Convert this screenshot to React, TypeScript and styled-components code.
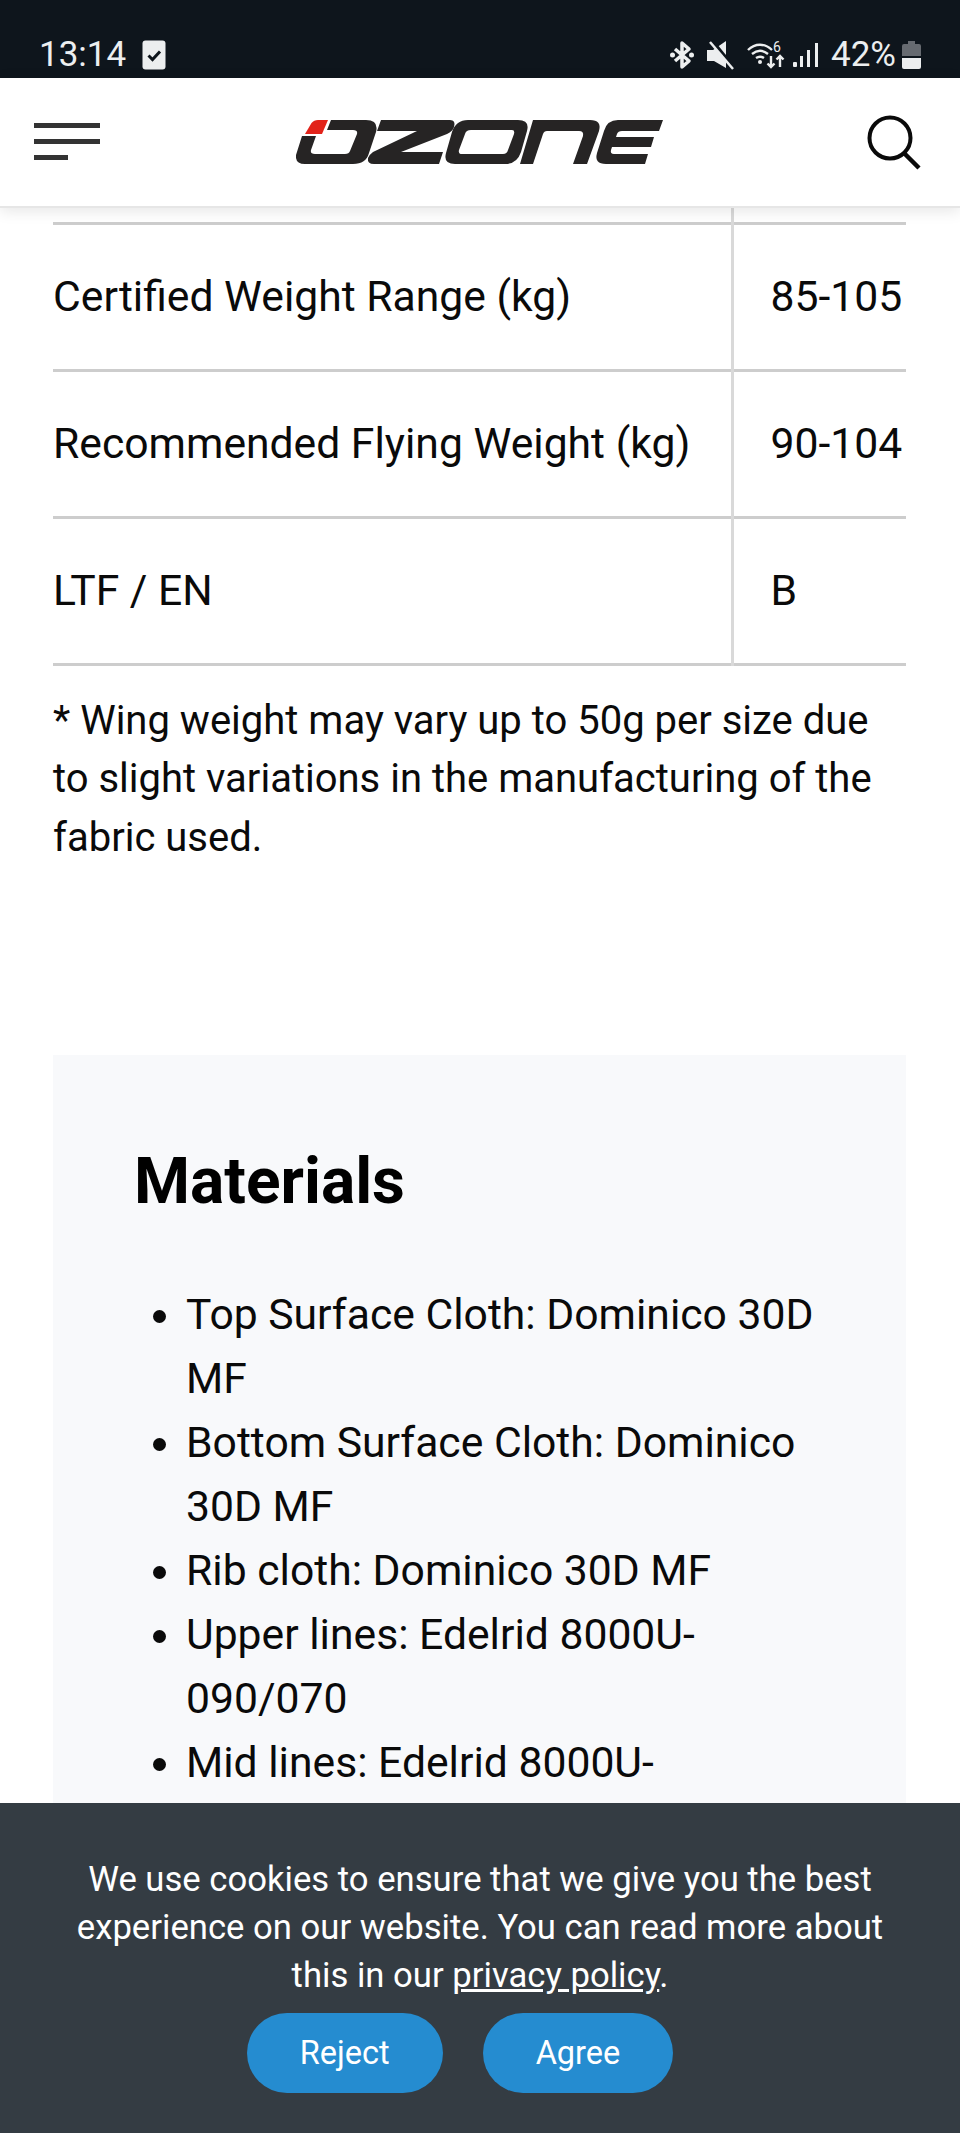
import React from "react";
import styled, { createGlobalStyle } from "styled-components";

const Global = createGlobalStyle`
  html, body { margin: 0; padding: 0; background: #fff; }
  body { font-family: Roboto, "Liberation Sans", sans-serif; color: #0a0a0a; }
  * { box-sizing: border-box; }
`;

const Screen = styled.div`
  position: relative;
  width: 960px;
  height: 2133px;
  overflow: hidden;
  display: flex;
  flex-direction: column;
`;

const StatusBar = styled.div`
  height: 78px;
  flex: none;
  background: #0e151c;
  color: #eceeef;
  display: flex;
  justify-content: space-between;
  align-items: flex-start;
  padding: 35px 39px 0 39px;
  font-size: 35px;
  line-height: 40px;
`;

const StatusGroup = styled.div`
  display: flex;
  align-items: center;
  height: 40px;
`;

const Time = styled.span`
  margin-right: 16px;
`;

const Percent = styled.span`
  margin: 0 6px 0 13px;
`;

const StatusIcon = styled.svg<{ $gap?: number }>`
  display: block;
  flex: none;
  overflow: visible;
  margin-left: ${(p) => p.$gap ?? 0}px;
`;

const Nav = styled.header`
  position: relative;
  z-index: 2;
  height: 130px;
  flex: none;
  background: #fff;
  border-bottom: 2px solid #e6e6e6;
  box-shadow: 0 3px 14px rgba(0, 0, 0, 0.1);
  display: flex;
  align-items: center;
  justify-content: space-between;
  padding: 0 39px 0 34px;
`;

const MenuButton = styled.div`
  width: 66px;
  display: flex;
  flex-direction: column;
  gap: 11px;
  margin-bottom: 1px;
`;

const MenuBar = styled.span<{ $short?: boolean }>`
  display: block;
  height: 5px;
  width: ${(p) => (p.$short ? "34px" : "66px")};
  background: #333;
`;

const Logo = styled.svg`
  display: block;
  margin: 1px 7px 0 0;
`;

const SearchIcon = styled.svg`
  display: block;
`;

const Main = styled.main`
  flex: 1;
  min-height: 0;
  overflow: hidden;
  padding: 0 54px 0 53px;
`;

const SpecTable = styled.table`
  width: 853px;
  table-layout: fixed;
  border-collapse: collapse;
  font-size: 42.67px;
`;

const Row = styled.tr`
  height: 147px;
  border-bottom: 3px solid #cdcdcd;
`;

const ClippedRow = styled.tr`
  height: 15px;
  border-bottom: 3px solid #cdcdcd;
`;

const NameCell = styled.td`
  width: 679px;
  padding: 0 0 2px;
  border-right: 3px solid #d9d9d9;
`;

const ValueCell = styled.td`
  padding: 0 0 2px 37px;
  white-space: nowrap;
`;

const Note = styled.p`
  margin: 26px 0 0;
  font-size: 40px;
  line-height: 58.67px;
`;

const Panel = styled.section`
  margin-top: 187px;
  background: #f8f9fb;
  padding: 89px 82px 0 81px;
  height: 900px;
`;

const Heading = styled.h2`
  margin: 0;
  font-size: 64px;
  line-height: 76px;
  font-weight: 700;
  color: #000;
`;

const List = styled.ul`
  margin: 62px 0 0;
  padding: 0 0 0 52px;
  font-size: 42.67px;
  line-height: 64px;
`;

const Banner = styled.aside`
  position: absolute;
  z-index: 3;
  left: 0;
  right: 0;
  bottom: 0;
  height: 330px;
  background: #343c43;
  color: #fff;
  text-align: center;
  padding: 52px 60px 0;
`;

const BannerText = styled.p`
  margin: 0;
  font-size: 34.67px;
  line-height: 48px;
`;

const BannerLink = styled.a`
  color: #fff;
  text-decoration: underline;
`;

const BannerActions = styled.div`
  margin-top: 14px;
  display: flex;
  justify-content: center;
`;

const Pill = styled.button`
  height: 80px;
  border: 0;
  border-radius: 40px;
  background: #258cd0;
  color: #fff;
  font: 400 32.5px Roboto, sans-serif;
  padding: 0 53px;
  margin-right: 40px;
`;

const rows = [
  ["Certified Weight Range (kg)", "85-105"],
  ["Recommended Flying Weight (kg)", "90-104"],
  ["LTF / EN", "B"],
];

const materials = [
  "Top Surface Cloth: Dominico 30D MF",
  "Bottom Surface Cloth: Dominico 30D MF",
  "Rib cloth: Dominico 30D MF",
  "Upper lines: Edelrid 8000U-090/070",
  "Mid lines: Edelrid 8000U-",
];

export default function App() {
  return (
    <Screen>
      <Global />
      <StatusBar>
        <StatusGroup>
          <Time>13:14</Time>
          <StatusIcon width="24" height="30" viewBox="0 0 24 30">
            <rect x="0.5" y="0.5" width="23" height="29" rx="3" fill="#eceeef" />
            <path d="M6.500 15.500l4 4 7.500-8" fill="none" stroke="#0e151c" strokeWidth="3" />
          </StatusIcon>
        </StatusGroup>
        <StatusGroup>
          <StatusIcon width="24" height="28" viewBox="0 0 24 28">
            <path
              d="M12 14V2l7 6-14 12M12 14v12l7-6L5 8"
              fill="none"
              stroke="#eceeef"
              strokeWidth="3.500"
              strokeLinejoin="round"
            />
            <circle cx="2.500" cy="14" r="2.500" fill="#eceeef" />
            <circle cx="21.500" cy="14" r="2.500" fill="#eceeef" />
          </StatusIcon>
          <StatusIcon $gap={13} width="27" height="28" viewBox="0 0 27 28">
            <path d="M0 9h6l13-9v27L7 20H0z" fill="#eceeef" />
            <path d="M5 0l22 27" stroke="#0e151c" strokeWidth="4" />
            <path d="M3 1l23 27" stroke="#eceeef" strokeWidth="2.500" />
          </StatusIcon>
          <StatusIcon $gap={13} width="38" height="28" viewBox="0 0 38 28">
            <g fill="none" stroke="#eceeef" strokeWidth="2.400">
              <path d="M1 9c7-7 17-7 24 0" />
              <path d="M5 13c5-4 11-4 16 0" />
              <path d="M9 17c3-2 5-2 8 0" />
              <path d="M24 15v11M20.500 22.500l3.500 3.500 3.500-3.500" />
              <path d="M33 26V15M29.500 18.500l3.500-3.500 3.500 3.500" />
            </g>
            <circle cx="13" cy="21" r="2" fill="#eceeef" />
            <text x="26" y="11" fontSize="14" fontFamily="Roboto" fill="#eceeef">
              6
            </text>
          </StatusIcon>
          <StatusIcon $gap={8} width="25" height="26" viewBox="0 0 25 26">
            <rect x="0" y="20" width="4" height="5" rx="1" fill="#eceeef" />
            <rect x="7" y="14" width="3" height="11" fill="#eceeef" />
            <rect x="14" y="8" width="3" height="17" fill="#eceeef" />
            <rect x="22" y="1" width="3" height="24" fill="#eceeef" />
          </StatusIcon>
          <Percent>42%</Percent>
          <StatusIcon width="19" height="28" viewBox="0 0 19 28">
            <path d="M6 0h7v3h4a2 2 0 0 1 2 2v10H0V5a2 2 0 0 1 2-2h4z" fill="#666a70" />
            <path d="M0 17h19v9a2 2 0 0 1-2 2H2a2 2 0 0 1-2-2z" fill="#eceeef" />
          </StatusIcon>
        </StatusGroup>
      </StatusBar>

      <Nav>
        <MenuButton>
          <MenuBar />
          <MenuBar />
          <MenuBar $short />
        </MenuButton>
        <Logo width="368" height="45" viewBox="296 120 368 45" aria-label="Ozone">
          <path d="M305 134h17l6-14h-10q-4 0-6.500 3z" fill="#e2231a" />
          <g fill="#262424">
            <path d="M302 136l-6 19q-1 9 9 9h48q13 0 16-11l7-21q3-12-10-12h-35l-4 10h26q5 0 4 4l-7 17q-1 3-5 3h-30q-5 0-4-4l5-14z" />
            <path d="M381 120h69q6 0 4 7-1 4-7 7l-46 18h42l-4 12h-65q-7 0-6-6 1-3 5-6l44-21h-40z" />
            <path
              fillRule="evenodd"
              d="M468 120h50q12 0 9 11l-6 21q-4 12-16 12h-50q-12 0-9-11l6-21q4-12 16-12zM471 130q-5 0-6 4l-6 16q-1 4 3 4h41q4 0 5-4l6-16q1-4-2-4z"
            />
            <path d="M533 120h57q12 0 9 11l-12 33h-14l10-28q1-5-4-5h-32q-3 0-4 3l-10 30h-13z" />
            <path d="M618 120h45l-4 11h-37q-4 0-5 3l-1 3h38l-3 10h-39l-1 3q-1 4 3 4h34l-3 10h-39q-12 0-9-11l7-22q3-11 14-11z" />
          </g>
        </Logo>
        <SearchIcon width="54" height="56" viewBox="0 0 54 56">
          <circle cx="23" cy="24" r="20.500" fill="none" stroke="#0a0a0a" strokeWidth="4" />
          <path d="M37 39l15 15" stroke="#0a0a0a" strokeWidth="4.500" />
        </SearchIcon>
      </Nav>

      <Main>
        <SpecTable>
          <tbody>
            <ClippedRow>
              <NameCell />
              <ValueCell />
            </ClippedRow>
            {rows.map(([name, value]) => (
              <Row key={name}>
                <NameCell>{name}</NameCell>
                <ValueCell>{value}</ValueCell>
              </Row>
            ))}
          </tbody>
        </SpecTable>
        <Note>
          * Wing weight may vary up to 50g per size due to slight variations in the manufacturing of the fabric used.
        </Note>
        <Panel>
          <Heading>Materials</Heading>
          <List>
            {materials.map((m) => (
              <li key={m}>{m}</li>
            ))}
          </List>
        </Panel>
      </Main>

      <Banner>
        <BannerText>
          We use cookies to ensure that we give you the best experience on our website. You can read more about this in
          our <BannerLink href="#">privacy policy</BannerLink>.
        </BannerText>
        <BannerActions>
          <Pill>Reject</Pill>
          <Pill>Agree</Pill>
        </BannerActions>
      </Banner>
    </Screen>
  );
}
